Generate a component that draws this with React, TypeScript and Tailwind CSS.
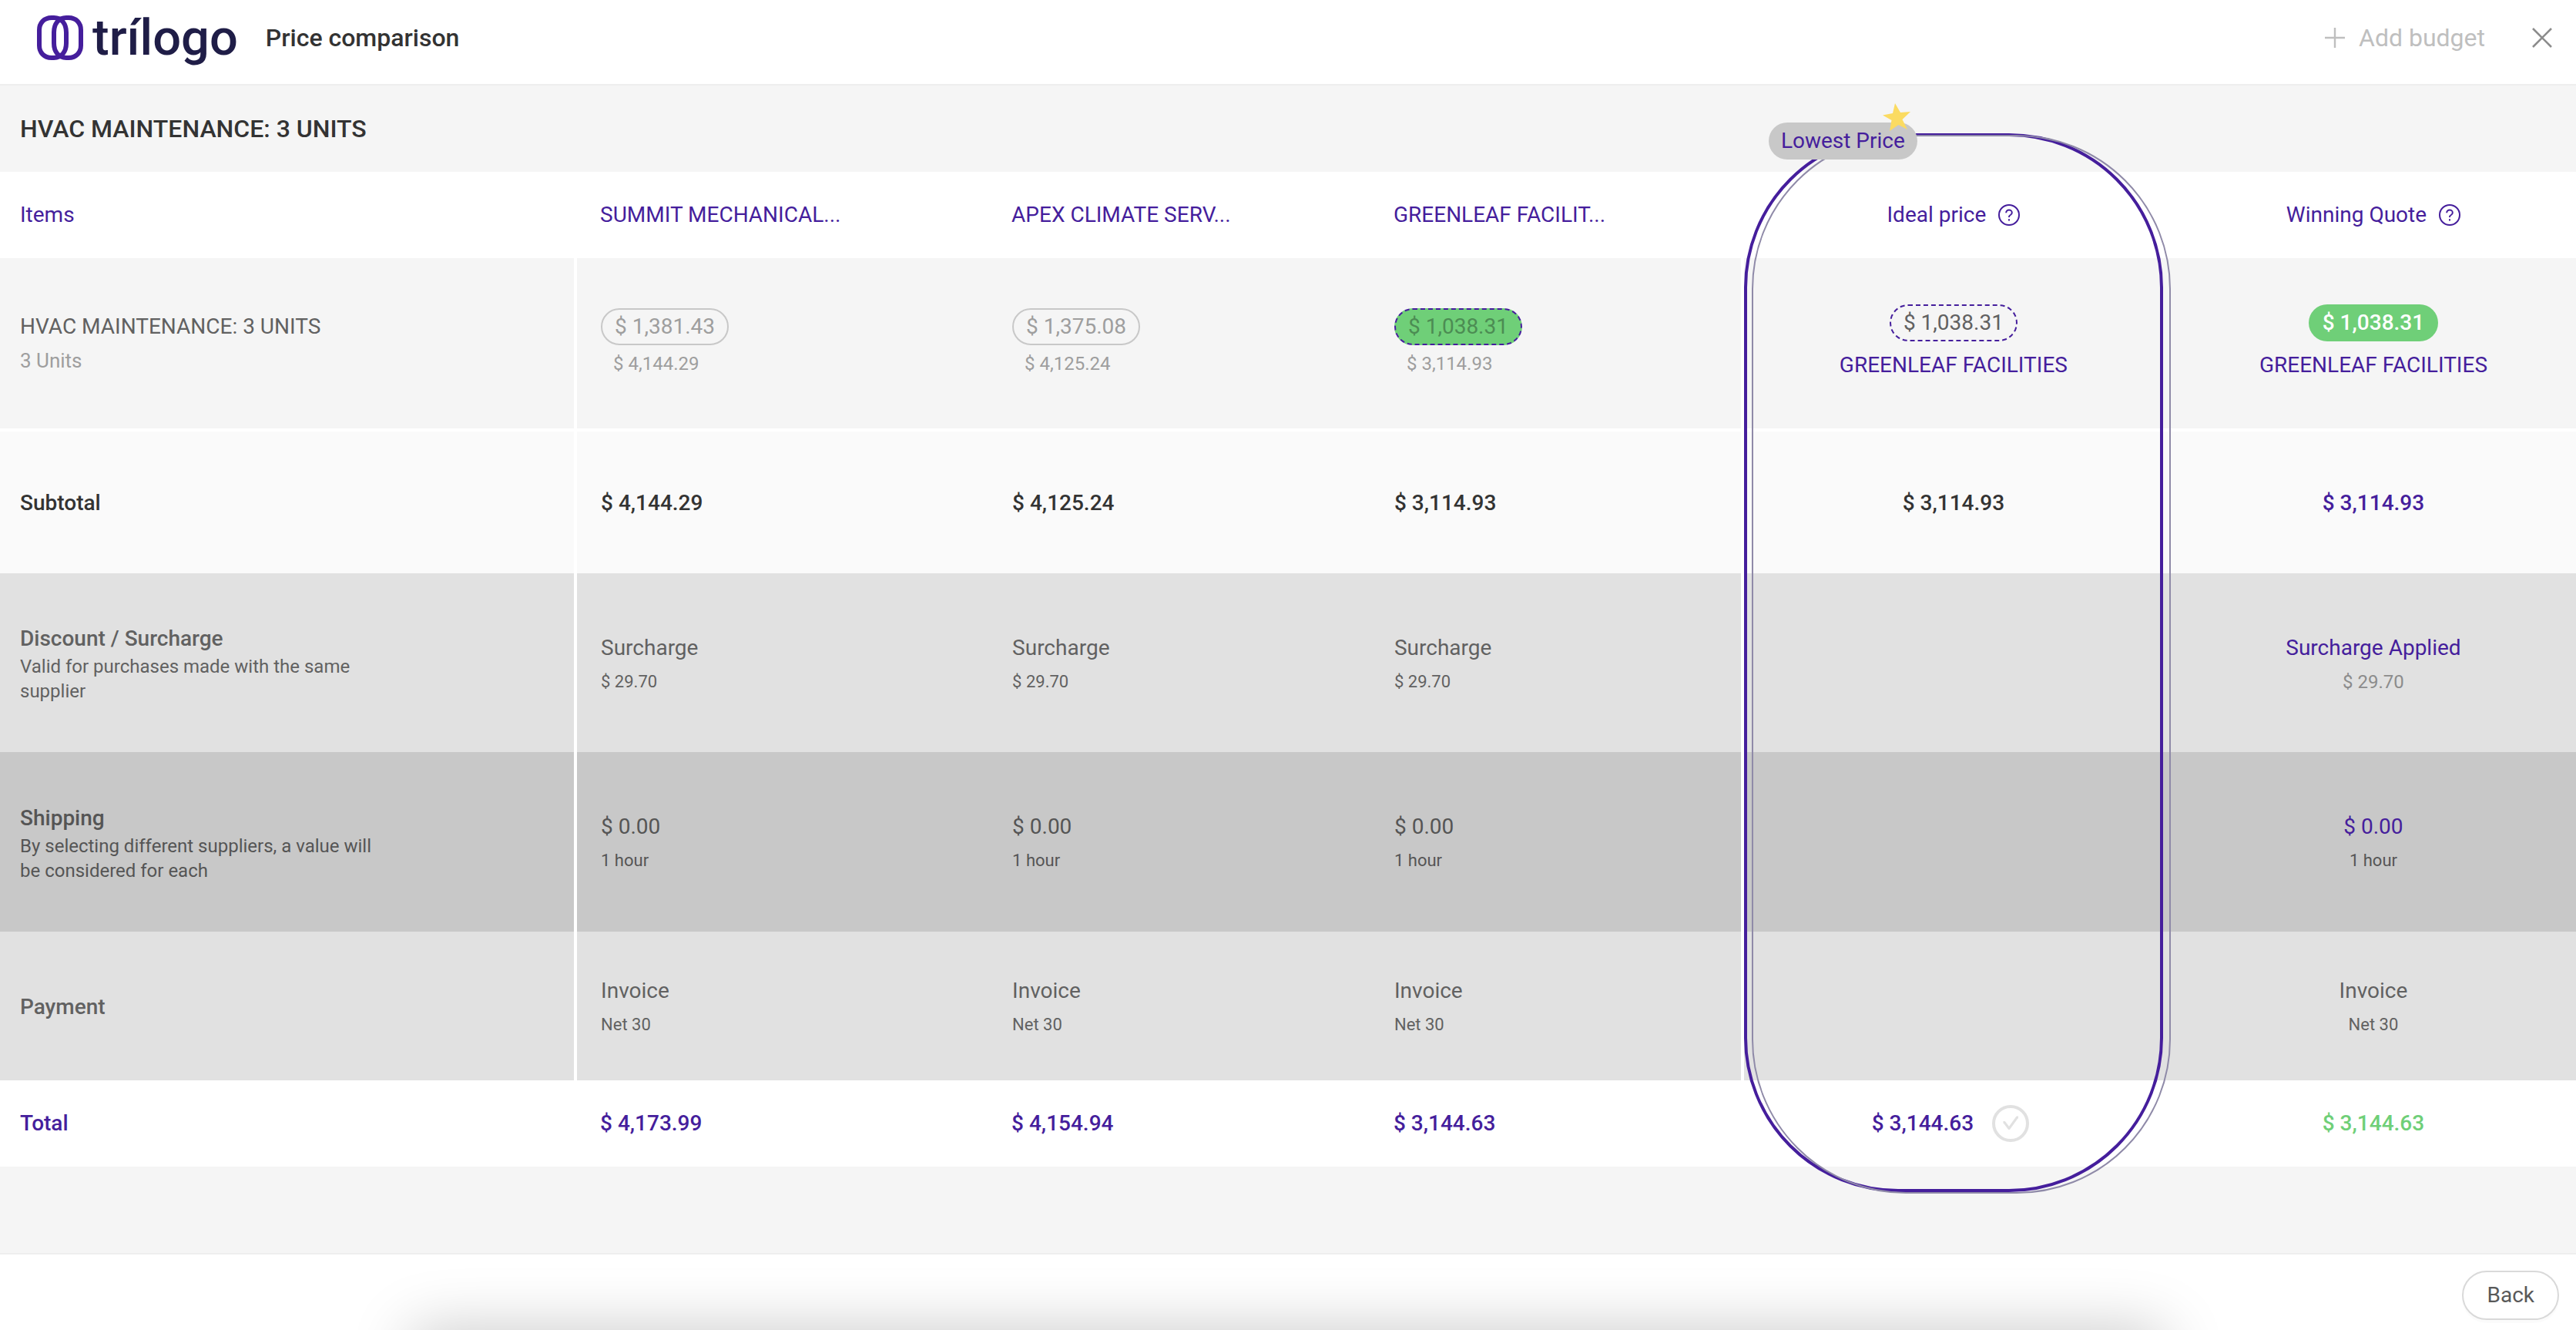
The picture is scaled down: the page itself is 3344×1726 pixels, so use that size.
import React from "react";
import { clsx } from "clsx";

type Quote = {
  supplier: string;
  unitPrice: string;
  itemTotal: string;
  subtotal: string;
  surcharge: string;
  shipping: string;
  deadline: string;
  payment: string;
  terms: string;
  total: string;
  best?: boolean;
};

const quotes: Quote[] = [
  {
    supplier: "SUMMIT MECHANICAL...",
    unitPrice: "$ 1,381.43",
    itemTotal: "$ 4,144.29",
    subtotal: "$ 4,144.29",
    surcharge: "$ 29.70",
    shipping: "$ 0.00",
    deadline: "1 hour",
    payment: "Invoice",
    terms: "Net 30",
    total: "$ 4,173.99",
  },
  {
    supplier: "APEX CLIMATE SERV...",
    unitPrice: "$ 1,375.08",
    itemTotal: "$ 4,125.24",
    subtotal: "$ 4,125.24",
    surcharge: "$ 29.70",
    shipping: "$ 0.00",
    deadline: "1 hour",
    payment: "Invoice",
    terms: "Net 30",
    total: "$ 4,154.94",
  },
  {
    supplier: "GREENLEAF FACILIT...",
    unitPrice: "$ 1,038.31",
    itemTotal: "$ 3,114.93",
    subtotal: "$ 3,114.93",
    surcharge: "$ 29.70",
    shipping: "$ 0.00",
    deadline: "1 hour",
    payment: "Invoice",
    terms: "Net 30",
    total: "$ 3,144.63",
    best: true,
  },
];

function Logo() {
  return (
    <div className="flex items-center gap-3">
      <svg className="w-[60px] h-[58px]" viewBox="0 0 60 58" fill="none" stroke="#451e9c" strokeWidth="6">
        <path d="M19 3h3c10 0 16 8 16 19v14c0 11-6 19-16 19h-3C9 55 3 48 3 39V19C3 10 9 3 19 3z" />
        <path d="M41 3h-3c-10 0-16 8-16 19v14c0 11 6 19 16 19h3c10 0 16-7 16-16V19C57 10 51 3 41 3z" />
      </svg>
      <span className="text-[65px] leading-[72px] font-medium text-[#1f1d47]">trílogo</span>
    </div>
  );
}

function HelpButton({ label }: { label: string }) {
  return (
    <button aria-label={label}>
      <svg className="block size-7" viewBox="0 0 28 28" fill="none" stroke="currentColor" strokeWidth="2">
        <circle cx="14" cy="14" r="13" />
        <path d="M10.2 11.2c0-2.2 1.7-3.7 3.8-3.7s3.8 1.4 3.8 3.4c0 1.6-.9 2.4-2 3.1-1.2.7-1.8 1.3-1.8 2.6v.4" />
        <path d="M14 19.2v2.2" />
      </svg>
    </button>
  );
}

function Lines({ top, bottom, className, bottomClass = "text-[22px]" }: { top: string; bottom: string; className?: string; bottomClass?: string }) {
  return (
    <div className="flex flex-col gap-2 pt-px">
      <span className={clsx("leading-10", className)}>{top}</span>
      <span className={clsx("leading-8", bottomClass)}>{bottom}</span>
    </div>
  );
}

function RowLabel({ title, hint }: { title: string; hint?: string }) {
  return (
    <th scope="row" className="border-r-4 border-white pt-0.5 pl-[26px] text-left font-medium">
      <div className="leading-10">{title}</div>
      {hint && <p className="max-w-[480px] text-2xl font-normal">{hint}</p>}
    </th>
  );
}

// the column before "Ideal price" carries the second white divider
const quoteCell = (i: number) => clsx("pl-[31px]", i === quotes.length - 1 && "border-r-4 border-white");

export default function App() {
  return (
    <div className="flex min-h-screen flex-col bg-[#f5f5f5] font-[Roboto,sans-serif] text-[28px] text-[#616161]">
      <header className="flex items-center border-b-2 border-[#eeeeee] bg-white pl-12 pr-[30px] h-[111px] pb-3">
        <Logo />
        <h1 className="ml-9 text-[32px] leading-10 font-medium text-[#333333]">Price comparison</h1>
        <button className="ml-auto flex items-center gap-[18px] text-[32px] leading-10 text-[#bfbfbf]">
          <svg className="size-[26px]" viewBox="0 0 26 26" stroke="currentColor" strokeWidth="2.4">
            <path d="M13 0v26M0 13h26" />
          </svg>
          Add budget
        </button>
        <button aria-label="Close" className="ml-[60px] text-[#8c8c8c]">
          <svg className="block size-7" viewBox="0 0 28 28" stroke="currentColor" strokeWidth="2.6">
            <path d="M2 2l24 24M26 2L2 26" />
          </svg>
        </button>
      </header>

      <main className="flex-1">
        <h2 className="flex h-28 items-center px-[26px] text-[32px] font-medium text-[#333333]">
          HVAC MAINTENANCE: 3 UNITS
        </h2>

        <div className="relative">
          <table className="w-full table-fixed border-separate border-spacing-0">
            <colgroup>
              <col className="w-[22.4%]" />
              <col className="w-[15.97%]" />
              <col className="w-[14.83%]" />
              <col className="w-[14.5%]" />
              <col className="w-[16.27%]" />
              <col className="w-[16.03%]" />
            </colgroup>
            <thead>
              <tr className="h-28 bg-white text-[#451e9c]">
                <th scope="col" className="pl-[26px] text-left font-normal">Items</th>
                {quotes.map((q) => (
                  <th key={q.supplier} scope="col" className="pl-[30px] text-left font-normal">{q.supplier}</th>
                ))}
                <th scope="col" className="font-normal">
                  <div className="flex items-center justify-center gap-4">
                    Ideal price
                    <HelpButton label="About the ideal price" />
                  </div>
                </th>
                <th scope="col" className="pl-2.5 font-normal">
                  <div className="flex items-center justify-center gap-4">
                    Winning Quote
                    <HelpButton label="About the winning quote" />
                  </div>
                </th>
              </tr>
            </thead>
            <tbody>
              <tr className="h-[225px] align-top">
                <th scope="row" className="border-r-4 border-b-4 border-white pl-[26px] pt-[69px] text-left font-normal">
                  <div className="leading-10">HVAC MAINTENANCE: 3 UNITS</div>
                  <div className="mt-2 text-[26px] leading-8 text-[#9e9e9e]">3 Units</div>
                </th>
                {quotes.map((q, i) => (
                  <td key={q.supplier} className={clsx(quoteCell(i), "border-b-4 border-white pt-[65px] text-[#9e9e9e]")}>
                    <button
                      className={clsx(
                        "block h-12 rounded-full border-2 px-4 leading-[44px]",
                        q.best ? "border-dashed border-[#451e9c] bg-[#6fcf78] text-[#4c8c53]" : "border-[#c8c8c8]"
                      )}
                    >
                      {q.unitPrice}
                    </button>
                    <div className="mt-2 pl-4 text-2xl">{q.itemTotal}</div>
                  </td>
                ))}
                <td className="border-b-4 border-white pt-[60px] text-center">
                  <div className="mx-auto h-12 w-fit rounded-full border-2 border-dashed border-[#451e9c] px-4 leading-[44px]">
                    $ 1,038.31
                  </div>
                  <div className="mt-3 leading-[38px] text-[#451e9c]">GREENLEAF FACILITIES</div>
                </td>
                <td className="border-b-4 border-white pl-2.5 pt-[60px] text-center">
                  <div className="mx-auto h-12 w-fit rounded-full bg-[#6fcf78] px-[18px] font-medium leading-[48px] text-white">
                    $ 1,038.31
                  </div>
                  <div className="mt-3 leading-[38px] text-[#451e9c]">GREENLEAF FACILITIES</div>
                </td>
              </tr>

              <tr className="h-[184px] bg-[#fafafa] font-medium text-[#333333]">
                <RowLabel title="Subtotal" />
                {quotes.map((q, i) => (
                  <td key={q.supplier} className={clsx(quoteCell(i), "pt-0.5")}>{q.subtotal}</td>
                ))}
                <td className="pt-0.5 text-center">$ 3,114.93</td>
                <td className="pt-0.5 pl-2.5 text-center text-[#451e9c]">$ 3,114.93</td>
              </tr>

              <tr className="h-[232px] bg-[#e1e1e1]">
                <RowLabel title="Discount / Surcharge" hint="Valid for purchases made with the same supplier" />
                {quotes.map((q, i) => (
                  <td key={q.supplier} className={quoteCell(i)}>
                    <Lines top="Surcharge" bottom={q.surcharge} />
                  </td>
                ))}
                <td />
                <td className="pl-2.5 text-center">
                  <Lines top="Surcharge Applied" bottom="$ 29.70" className="text-[#451e9c]" bottomClass="text-2xl text-[#8c8c8c]" />
                </td>
              </tr>

              <tr className="h-[233px] bg-[#c8c8c8] text-[#555555]">
                <RowLabel title="Shipping" hint="By selecting different suppliers, a value will be considered for each" />
                {quotes.map((q, i) => (
                  <td key={q.supplier} className={quoteCell(i)}>
                    <Lines top={q.shipping} bottom={q.deadline} />
                  </td>
                ))}
                <td />
                <td className="pl-2.5 text-center">
                  <Lines top="$ 0.00" bottom="1 hour" className="text-[#451e9c]" />
                </td>
              </tr>

              <tr className="h-[193px] bg-[#e1e1e1]">
                <RowLabel title="Payment" />
                {quotes.map((q, i) => (
                  <td key={q.supplier} className={quoteCell(i)}>
                    <Lines top={q.payment} bottom={q.terms} />
                  </td>
                ))}
                <td />
                <td className="pl-2.5 text-center">
                  <Lines top="Invoice" bottom="Net 30" />
                </td>
              </tr>
            </tbody>
            <tfoot>
              <tr className="h-28 bg-white font-medium text-[#451e9c]">
                <th scope="row" className="pl-[26px] text-left font-medium">Total</th>
                {quotes.map((q) => (
                  <td key={q.supplier} className="pl-[30px]">{q.total}</td>
                ))}
                <td className="pr-2">
                  <div className="flex items-center justify-center gap-6">
                    $ 3,144.63
                    <button aria-label="Choose the ideal price">
                      <svg className="block size-12" viewBox="0 0 48 48" fill="none" stroke="#e1e1e1">
                        <circle cx="24" cy="24" r="22" strokeWidth="4" />
                        <path d="M14.5 22.500h1.500l6 8 10.500-14.500h1.500" strokeWidth="3" strokeLinejoin="round" />
                      </svg>
                    </button>
                  </div>
                </td>
                <td className="pl-2.5 text-center text-[#6fcf78]">$ 3,144.63</td>
              </tr>
            </tfoot>
          </table>

          {/* Double outline around the ideal price column */}
          <div className="pointer-events-none absolute -top-[50px] -bottom-[33px] left-[67.7%] w-[16.27%]">
            <div className="absolute inset-0 rounded-[200px] border-4 border-[#451e9c]" />
            <div className="absolute inset-0 translate-x-2.5 translate-y-0.5 rounded-[200px] border-2 border-[#8f8aa8]" />
            <div className="absolute -top-3.5 left-8 h-12 rounded-full bg-[#c8c8c8] px-4 leading-[48px] whitespace-nowrap text-[#451e9c]">
              Lowest Price
              <svg className="absolute -top-[26px] right-2 size-[38px]" viewBox="0 0 38 38" fill="#fbdb61">
                <path d="M17 1l7 12 13-1-10.500 10L33 35l-11.500-6L10 37l2.500-14L1 16.500l13-2.500z" />
              </svg>
            </div>
          </div>
        </div>
      </main>

      <footer className="relative flex h-[100px] items-center justify-end overflow-hidden border-t-2 border-[#eeeeee] bg-white pr-[22px] pt-2">
        <div className="absolute top-full left-[16%] right-[16%] h-20 shadow-[0_0_80px_rgba(0,0,0,0.22)]" />
        <button className="relative h-16 rounded-full border-2 border-[#d9d9d9] bg-white px-[30px] text-[#595959] shadow-[0_4px_0_rgba(0,0,0,0.015)]">
          Back
        </button>
      </footer>
    </div>
  );
}
